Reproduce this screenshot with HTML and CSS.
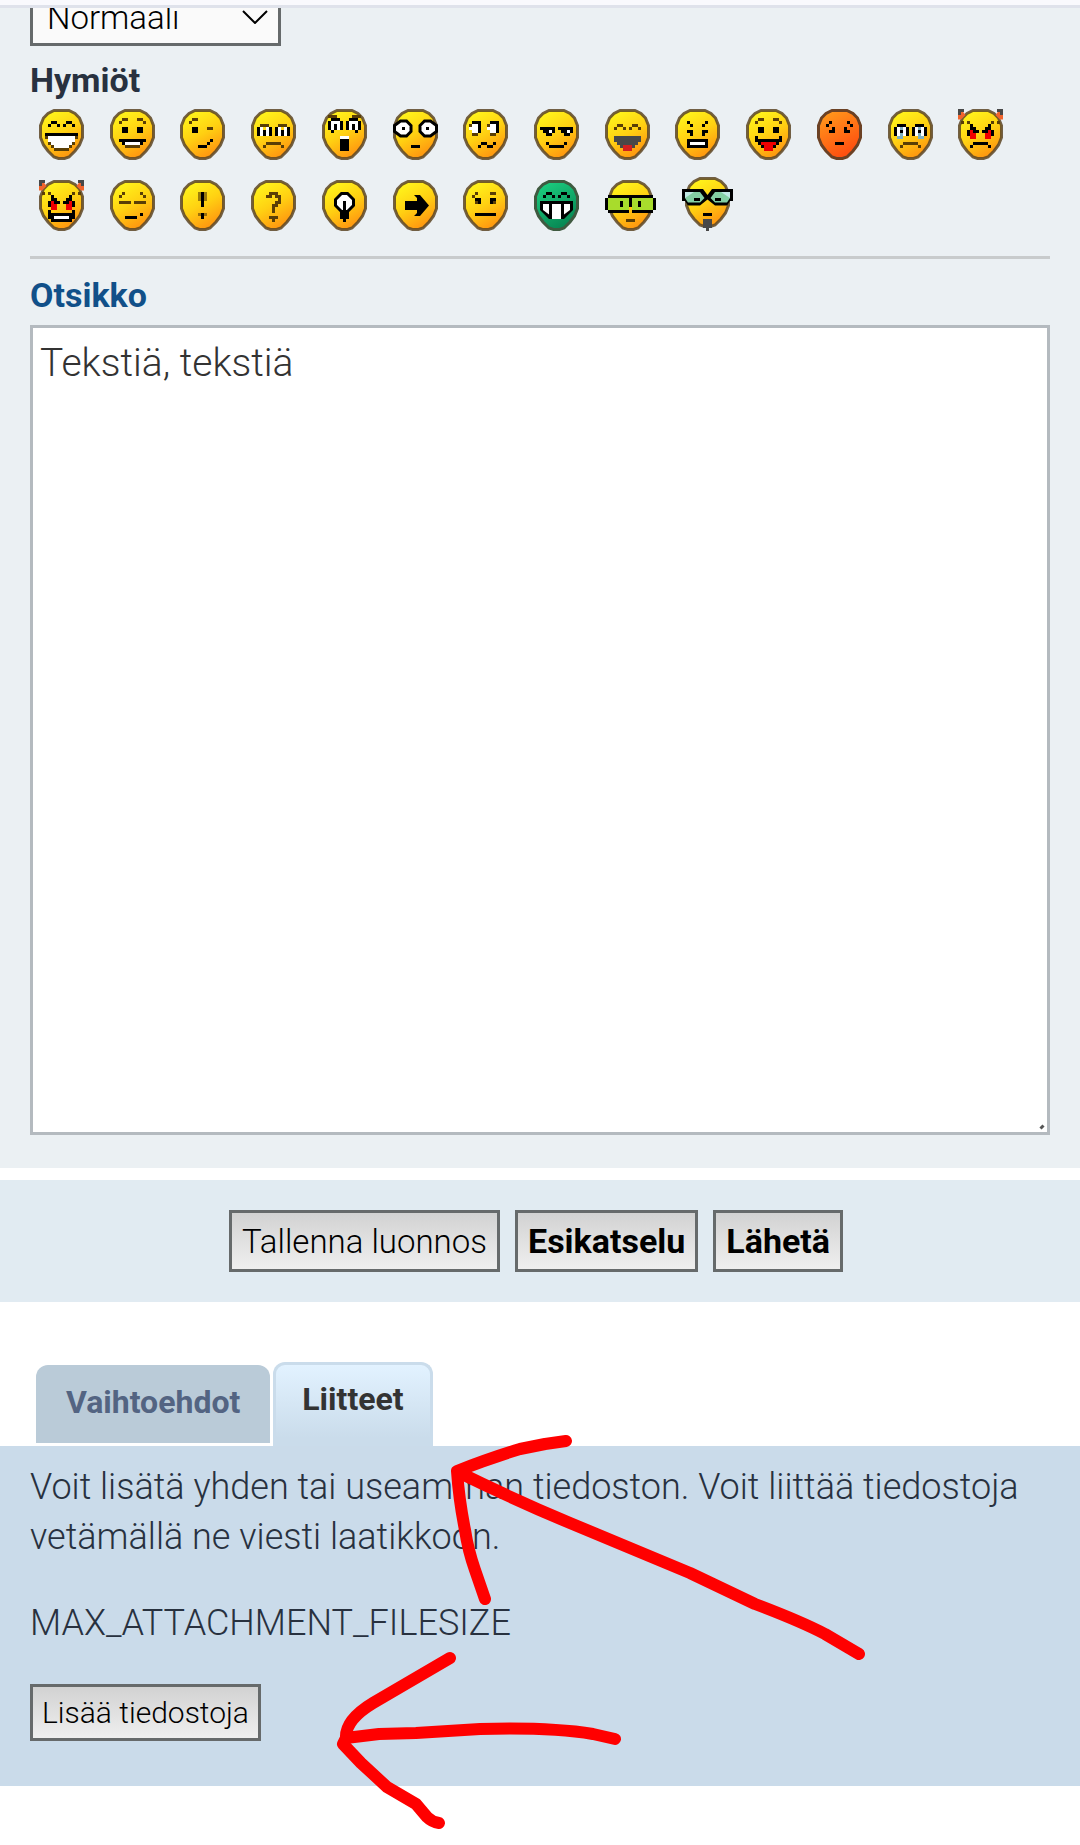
FILE: index.html
```html
<!DOCTYPE html>
<html lang="fi">
<head>
    <meta charset="UTF-8">
    <meta name="viewport" content="width=device-width, initial-scale=1.0">
    <title>Lähetä viesti</title>
    <link rel="stylesheet" href="styles.css">
</head>
<body>

    <!-- shared smiley shapes -->
    <svg class="defs" aria-hidden="true">
        <defs>
            <linearGradient id="yellow" x1="0.2" y1="0" x2="0.7" y2="1">
                <stop offset="0.1" stop-color="#fff01a"/>
                <stop offset="0.5" stop-color="#ffd012"/>
                <stop offset="0.9" stop-color="#ff9c10"/>
            </linearGradient>
            <linearGradient id="red" x1="0.2" y1="0" x2="0.7" y2="1">
                <stop offset="0" stop-color="#ff9a1c"/>
                <stop offset="0.9" stop-color="#ff5010"/>
            </linearGradient>
            <linearGradient id="green" x1="0.2" y1="0" x2="0.7" y2="1">
                <stop offset="0" stop-color="#1ccf80"/>
                <stop offset="0.9" stop-color="#088a55"/>
            </linearGradient>
            <path id="egg" d="M5 .5h5l2 1 1.500 1.500 1 2.500v4l-1 2.500-1.500 2-2 2-1.500.500h-2l-1.500-.500-2-2-1.500-2-1-2.500v-4l1-2.500 1.500-1.500z"/>
            <g id="face"><use href="#egg" fill="url(#yellow)" stroke="#5c4524" stroke-opacity=".85"/></g>
            <g id="horns">
                <path d="M0 0h1l1.500 2-1.500 1.500H0zM15 0h-1l-1.500 2 1.500 1.500h1z" fill="#f0642c"/>
                <path class="g" d="M0 .5h2M13 .5h2M.5 0v2M14.500 0v2"/>
                <path class="b" d="M1 4.500h1M3 4.500h1M11 4.500h1M13 4.500h1"/>
            </g>
            <g id="evileyes">
                <path class="r" d="M3 8.500h3M9 8.500h3M4 7.500h2M9 7.500h2M4 9.500h2M9 9.500h2"/>
                <path class="k" d="M4 5.500h1M4 6.500h2M3 7.500h1M5 7.500h2M3 8.500h1M10 5.500h1M9 6.500h2M11 7.500h1M8 7.500h2M11 8.500h1"/>
            </g>
            <g id="openeyes">
                <path class="b" d="M4 3.500h2M3 4.500h1M9 3.500h2M11 4.500h1"/>
                <path class="k" d="M4 6.500h2M4 7.500h2M9 6.500h2M9 7.500h2"/>
            </g>
        </defs>
    </svg>

    <div class="topline"></div>

    <main>
        <form class="panel">
            <div class="fontsize">
                <select aria-label="Fonttikoko"><option>Normaali</option></select>
                <svg class="chevron" viewBox="0 0 26 14"><path d="M1 1l12 12L25 1"/></svg>
            </div>

            <h2>Hymiöt</h2>
            <div class="smileys">
                <a href="#" aria-label=":D"><svg viewBox="0 0 15 17"><use href="#face"/><path class="k" d="M3 5.500h1M4 4.500h2M6 5.500h1M8 5.500h1M9 4.500h2M11 5.500h1M2 8.500h11"/><path class="b" d="M2 9.500h1M12 9.500h1M3 11.500h1M11 11.500h1M4 12.500h1M10 12.500h1M5 13.500h5"/><path class="w" d="M3 9.500h9M3 10.500h9M4 11.500h7M5 12.500h5"/></svg></a>
                <a href="#" aria-label=":)"><svg viewBox="0 0 15 17"><use href="#face"/><use href="#openeyes"/><path class="k" d="M3 10.500h9M4 11.500h7"/><path class="b" d="M5 12.500h5"/><path class="w" d="M5 11.500h5"/></svg></a>
                <a href="#" aria-label=";)"><svg viewBox="0 0 15 17"><use href="#face"/><path class="b" d="M4 3.500h2M3 4.500h1M9 6.500h2"/><path class="k" d="M4 6.500h2M4 7.500h2M6 12.500h3M9 11.500h1M10 10.500h1"/></svg></a>
                <a href="#" aria-label=":("><svg viewBox="0 0 15 17"><use href="#face"/><path class="b" d="M3 5.500h3M9 5.500h3M5 11.500h5M4 12.500h1M10 12.500h1"/><path class="w" d="M3.500 6v3M5.500 6v3M9.500 6v3M11.500 6v3"/><path class="k" d="M2.500 6v3M4.500 7v2M6.500 6v3M8.500 6v3M10.500 7v2M12.500 6v3"/></svg></a>
                <a href="#" aria-label=":o"><svg viewBox="0 0 15 17"><use href="#face"/><path class="b" d="M2 2.500h3M10 2.500h3"/><path class="w" d="M3 4.500h3M3.500 4v3M5.500 4v3M9 4.500h3M9.500 4v3M11.500 4v3M6 9.500h3"/><path class="k" d="M3 3.500h3M2.500 4v3M4.500 5v2M6.500 4v3M9 3.500h3M8.500 4v3M10.500 5v2M12.500 4v3M3 7.500h1M11 7.500h1M6 10.500h3M6 11.500h3M6 12.500h3M6 13.500h3"/></svg></a>
                <a href="#" aria-label=":shock:"><svg viewBox="0 0 15 17"><use href="#face"/><path d="M2.500 4h2l1.500 1.500v2l-1.500 1.500h-2L.5 7.500v-2zM10.500 4h2l2 1.500v2l-2 1.500h-2L9 7.500v-2z" fill="#fff" stroke="#000"/><path class="k" d="M3 6.500h1M11 6.500h1M6 12.500h3"/></svg></a>
                <a href="#" aria-label=":?"><svg viewBox="0 0 15 17"><use href="#face"/><path class="w" d="M3 5.500h2M2 6.500h3M3 7.500h2M9 5.500h2M8 6.500h3M9 7.500h2"/><path class="b" d="M2 5.500h1M8 5.500h1M3 8.500h2M9 8.500h2"/><path class="k" d="M3 4.500h3M5.500 5v3M9 4.500h3M11.500 5v3M5 12.500h1M6 11.500h2M8 12.500h2M10 11.500h1"/></svg></a>
                <a href="#" aria-label="8-)"><svg viewBox="0 0 15 17"><use href="#face"/><path class="k" d="M2 6.500h5M3 7.500h4M4 8.500h2M8 6.500h5M9 7.500h4M10 8.500h2M4 11.500h1M5 12.500h5M10 11.500h1"/><path class="w" d="M5 7.500h1M11 7.500h1"/></svg></a>
                <a href="#" aria-label=":lol:"><svg viewBox="0 0 15 17"><use href="#face"/><path class="b" d="M4 5.500h2M3 6.500h1M6 6.500h1M9 5.500h2M8 6.500h1M11 6.500h1"/><path class="g" d="M3 9.500h9M3 10.500h9M4 11.500h7M5 12.500h5M6 13.500h3"/><path d="M6 12.500h3M6 13.500h3" stroke="#d02020"/></svg></a>
                <a href="#" aria-label=":x"><svg viewBox="0 0 15 17"><use href="#face"/><path class="k" d="M4 4.500h1M5 5.500h1M10 4.500h1M9 5.500h1M4 7.500h2M5 8.500h1M9 7.500h2M9 8.500h1M4 10.500h7M4 11.500h7M4 12.500h7"/><path class="w" d="M5 11.500h5"/></svg></a>
                <a href="#" aria-label=":P"><svg viewBox="0 0 15 17"><use href="#face"/><use href="#openeyes"/><path class="k" d="M3 9.500h1M11 9.500h1M3 10.500h9M4 11.500h7M5 12.500h5"/><path class="r" d="M5 11.500h5M6 12.500h3M6 13.500h3"/></svg></a>
                <a href="#" aria-label=":oops:"><svg viewBox="0 0 15 17"><use href="#egg" fill="url(#red)" stroke="#6b4124"/><path class="k" d="M4 4.500h1M3 5.500h1M10 4.500h1M11 5.500h1M5 6.500h1M4 7.500h2M9 6.500h1M9 7.500h2M6 11.500h3"/></svg></a>
                <a href="#" aria-label=":cry:"><svg viewBox="0 0 15 17"><use href="#face"/><path class="w" d="M3.500 6v3M5.500 6v3M9.500 6v3M11.500 6v3"/><path d="M4.500 6v3M3 9.500h2M10.500 6v3M10 9.500h2" stroke="#7fb0c0"/><path class="k" d="M3 5.500h3M2.500 6v3M4.500 7v1M6.500 6v3M9 5.500h3M8.500 6v3M10.500 7v1M12.500 6v3"/><path class="b" d="M5 11.500h5M4 12.500h1M10 12.500h1"/></svg></a>
                <a href="#" aria-label=":evil:"><svg viewBox="0 0 15 17"><use href="#face"/><use href="#horns"/><use href="#evileyes"/><path class="k" d="M5 11.500h5M4 12.500h1M10 12.500h1"/></svg></a>
                <a href="#" aria-label=":twisted:"><svg viewBox="0 0 15 17"><use href="#face"/><use href="#horns"/><use href="#evileyes"/><path class="k" d="M3 10.500h1M11 10.500h1M3 11.500h9M3 12.500h9M4 13.500h7"/><path class="w" d="M5 12.500h5"/></svg></a>
                <a href="#" aria-label=":roll:"><svg viewBox="0 0 15 17"><use href="#face"/><path class="b" d="M4 4.500h1M3 5.500h1M10 4.500h1M11 5.500h1M3 7.500h4M8 7.500h4"/><path class="k" d="M5 12.500h4M10 11.500h1"/></svg></a>
                <a href="#" aria-label=":!:"><svg viewBox="0 0 15 17"><use href="#face"/><path class="b" d="M6 4.500h3M6.500 5v2M8.500 5v2M6 11.500h3" opacity=".6"/><path class="k" d="M7.500 4v5M7 11.500h1M7 12.500h1"/></svg></a>
                <a href="#" aria-label=":?:"><svg viewBox="0 0 15 17"><use href="#face"/><path class="b" d="M6 4.500h3M5 5.500h2M8 5.500h2M9 6.500h1M8 7.500h2M7 8.500h2M7 9.500h1M7 10.500h1M6 12.500h3M7 13.500h1"/></svg></a>
                <a href="#" aria-label=":idea:"><svg viewBox="0 0 15 17"><use href="#face"/><path d="M6.500 4.500h2l2 2v2l-2 2h-2l-2-2v-2z" fill="#fff" stroke="#000"/><path class="k" d="M7.500 7v7M6 10.500h3M6 11.500h3M6 12.500h3"/></svg></a>
                <a href="#" aria-label=":arrow:"><svg viewBox="0 0 15 17"><use href="#face"/><path d="M4 7h4V6L7 5h2l3 3.500L9 12H7l1-1v-1H4z"/></svg></a>
                <a href="#" aria-label=":|"><svg viewBox="0 0 15 17"><use href="#face"/><path class="b" d="M4 4.500h1M3 5.500h1M9 4.500h2M4 7.500h2M9 7.500h2"/><path class="k" d="M4 6.500h2M9 6.500h2M5 7.500h1M9 7.500h1M4 11.500h7"/></svg></a>
                <a href="#" aria-label=":mrgreen:"><svg viewBox="0 0 15 17"><use href="#egg" fill="url(#green)" stroke="#3f5a40"/><path class="k" d="M4 4.500h2M3 5.500h1M6 5.500h1M9 4.500h2M8 5.500h1M11 5.500h1"/><path d="M2 7h11v3l-3 3H5l-3-3z"/><path d="M3 8h2v3.500L3 10zM6 8h3v5H6zM10 8h2v2l-2 1.500z" fill="#fff"/></svg></a>
                <span class="wide">
                    <a href="#" aria-label=":geek:"><svg viewBox="0 0 17 17"><use href="#face" x="1"/><path d="M1 5h15v1h1v4h-1v1H9V9H8v2H1v-1H0V6h1z"/><path d="M1 6h7v4H1zM9 6h7v4H9z" fill="#a8dc2c"/><path class="k" d="M5.500 7v2M11.500 7v2"/><path class="b" d="M7 13.500h3"/></svg></a>
                    <a href="#" aria-label=":ugeek:"><svg class="tall" viewBox="0 0 17 18"><use href="#face" x="1"/><path class="g" d="M7 14.500h3M7 15.500h3M7 16.500h3M8 17.500h1"/><path d="M0 4h7l1.500 2L10 4h7v4h-1l-1 1.500h-4L8.500 7.500 6 9.500H2L1 8H0z"/><path d="M1 5h5l1.500 2L6 8.500H2L1 7zM16 5h-5L9.500 7 11 8.500h4L16 7z" fill="#84cfa4"/><path d="M1 5h3L1 7zM16 5h-3l3 2z" fill="#c0e8e4"/><path class="k" d="M4 7.500h2M11 7.500h2M7 12.500h3"/></svg></a>
                </span>
            </div>

            <hr>

            <label class="title" for="message">Otsikko</label>
            <div class="editor">
                <textarea id="message">Tekstiä, tekstiä</textarea>
                <svg class="grip" viewBox="0 0 6 6"><path d="M1.500 4.500l3-3"/></svg>
            </div>
        </form>

        <div class="submit">
            <button type="button">Tallenna luonnos</button>
            <button type="button" class="bold">Esikatselu</button>
            <button type="button" class="bold">Lähetä</button>
        </div>

        <nav class="tabs">
            <a href="#options">Vaihtoehdot</a>
            <a href="#attach" class="active">Liitteet</a>
        </nav>

        <section class="attach" id="attach">
            <p>Voit lisätä yhden tai useamman tiedoston. Voit liittää tiedostoja vetämällä ne viesti laatikkoon.</p>
            <p>MAX_ATTACHMENT_FILESIZE</p>
            <button type="button">Lisää tiedostoja</button>

            <!-- hand drawn arrows -->
            <svg class="arrows" viewBox="330 1430 540 410" aria-hidden="true">
                <path d="M566 1441L545 1444L520 1449Q490 1458 457 1471Q459 1500 465 1530Q468 1550 475 1570L485 1599"/>
                <path d="M458 1472Q515 1500 570 1523L690 1573L755 1604Q800 1621 825 1634L859 1654"/>
                <path d="M450 1658L373 1703Q345 1720 346 1738L379 1734L416 1733L480 1729Q550 1727 593 1734L615 1739"/>
                <path d="M346 1738L343 1744L361 1763L387 1787L416 1804L427 1817Q432 1822 439 1823"/>
            </svg>
        </section>
    </main>

</body>
</html>
```
FILE: styles.css
```css
* {
    box-sizing: border-box;
}
body {
    margin: 0;
    background-color: #fff;
    font-family: Roboto, "Liberation Sans", sans-serif;
    font-size: 36px;
    font-weight: 300;
    color: #28313f;
}
main {
    padding-bottom: 59px;
}
.defs {
    position: absolute;
    width: 0;
    height: 0;
}
.topline {
    height: 8px;
    background-color: #f9f9fd;
    border-bottom: 3px solid #dfe2eb;
}
.panel {
    padding: 0 30px 33px;
    background-color: #ebf0f3;
}

/* font size select, scrolled half out of view */
.fontsize {
    position: relative;
    display: flex;
    align-items: flex-end;
    width: 251px;
    height: 38px;
    overflow: hidden;
}
select {
    flex: none;
    width: 100%;
    height: 58px;
    padding: 0 14px;
    appearance: none;
    border: 3px solid #666a6b;
    border-radius: 0;
    background-color: #fafafa;
    color: #000;
    font: inherit;
    font-size: 33px;
}
.chevron {
    position: absolute;
    right: 13px;
    top: 2px;
    width: 26px;
    height: 14px;
    fill: none;
    stroke: #000;
    stroke-width: 2;
    pointer-events: none;
}

h2,
.title {
    display: block;
    margin: 0;
    font-size: 34px;
    font-weight: 700;
    line-height: 40px;
}
h2 {
    padding-top: 14px;
}
.title {
    color: #115089;
    padding: 16px 0 10px;
}
hr {
    height: 3px;
    margin: 25px 0 0;
    border: none;
    background-color: #c8cbcc;
}

.smileys {
    display: grid;
    grid-template-columns: repeat(14, 1fr);
    align-items: end;
    row-gap: 17px;
    padding: 9px 21px 0 9px;
}
.smileys svg {
    display: block;
    width: 45px;
    height: 51px;
}
.smileys .wide {
    grid-column: span 2;
    display: flex;
    align-items: flex-end;
    gap: 26px;
}
.smileys .wide svg {
    width: 51px;
}
.smileys .wide .tall {
    height: 54px;
}
.k { stroke: #000; }
.w { stroke: #fff; }
.b { stroke: #5a3e06; }
.g { stroke: #484848; }
.r { stroke: #f00000; }

.editor {
    position: relative;
}
textarea {
    display: block;
    width: 100%;
    height: 810px;
    padding: 9px 7px;
    border: 3px solid #b4babf;
    border-radius: 0;
    background-color: #fff;
    color: #333;
    font: inherit;
    font-size: 39px;
    line-height: 52px;
    resize: none;
}
.grip {
    position: absolute;
    right: 5px;
    bottom: 5px;
    width: 6px;
    height: 6px;
    stroke: #555;
    stroke-width: 3;
}

button {
    height: 62px;
    padding: 0 10px;
    border: 3px solid #666a6b;
    border-radius: 0;
    background: linear-gradient(#d2d2d2, #efefef);
    color: #000;
    font: inherit;
    font-size: 33px;
    cursor: pointer;
}
.bold {
    font-size: 34px;
    font-weight: 700;
}
.submit {
    display: flex;
    justify-content: center;
    gap: 15px;
    margin-top: 12px;
    padding: 30px 8px 30px 0;
    background-color: #e1ebf2;
}

.tabs {
    display: flex;
    align-items: flex-end;
    gap: 3px;
    margin-top: 60px;
    padding-left: 36px;
}
.tabs a {
    height: 78px;
    margin-bottom: 3px;
    padding: 0 30px;
    border-radius: 12px 12px 0 0;
    background-color: #bacbd8;
    color: #536482;
    font-size: 32px;
    font-weight: 700;
    line-height: 74px;
    text-decoration: none;
}
.tabs .active {
    height: 84px;
    margin-bottom: 0;
    padding: 0 26px;
    border: 3px solid #cadceb;
    border-bottom: none;
    background: linear-gradient(#e2f2ff, #cadceb 90%);
    color: #333;
    line-height: 68px;
}

.attach {
    position: relative;
    padding: 16px 30px 45px;
    background-color: #cadbea;
}
.attach p {
    margin: 0 0 36px;
    line-height: 50px;
}
.attach button {
    display: block;
    height: 57px;
    padding: 0 9px;
    font-size: 30px;
}
.arrows {
    position: absolute;
    left: 330px;
    top: -16px;
    width: 540px;
    height: 410px;
    fill: none;
    stroke: #f00;
    stroke-width: 12;
    stroke-linecap: round;
    stroke-linejoin: round;
    pointer-events: none;
}
```
